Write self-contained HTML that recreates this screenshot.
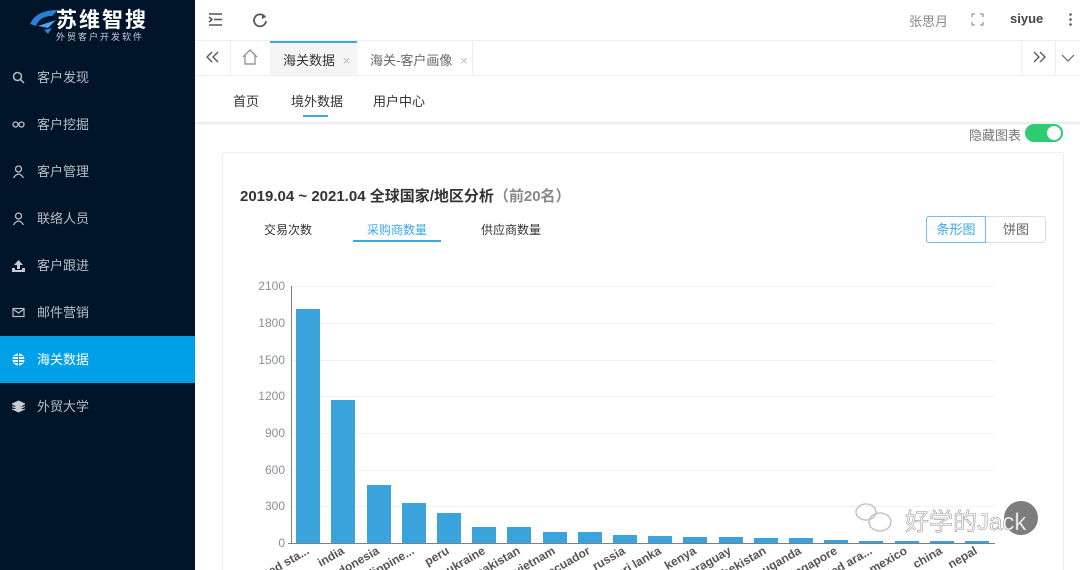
<!DOCTYPE html>
<html style="width:1080px;height:570px;overflow:hidden"><head><meta charset="utf-8"><style>
*{margin:0;padding:0;box-sizing:border-box}
body{width:1080px;height:570px;overflow:hidden;font-family:"Liberation Sans","Noto Sans CJK SC",sans-serif;background:#fff;position:relative;font-size:13px;color:#333}
.side{position:absolute;left:0;top:0;width:195px;height:570px;background:#001529}
.logo{position:absolute;left:30px;top:4px;color:#fff}
.item{position:absolute;left:0;width:195px;height:47px;color:#b8bec6;font-size:13px;line-height:47px;padding-left:37px}
.item i{position:absolute;left:12px;top:17px;width:13px;height:13px;display:block;line-height:0}
.item i svg{display:block}
.act{background:#00a0e9;color:#fff}
.abs{position:absolute}
</style></head><body>
<div class="side">
 <div class="logo">
  <svg class="abs" style="left:-4px;top:2px" width="40" height="30"><path d="M4 18 Q10 4 32 4 L26 10 Q14 10 10 20 Z" fill="#2a7fd6"/><path d="M12 20 L30 14 L22 22 Z" fill="#4fa3f0"/><path d="M18 24 L26 22 L22 28Z" fill="#2a7fd6"/></svg>
  <div class="abs" style="left:26px;top:0;font-size:21px;font-weight:bold;letter-spacing:2px;white-space:nowrap">苏维智搜</div>
  <div class="abs" style="left:26px;top:26px;font-size:9px;letter-spacing:2px;white-space:nowrap;color:#ccd">外贸客户开发软件</div>
 </div>
 <div class="item" style="top:54px"><i><svg width="13" height="13"><circle cx="5.5" cy="5.5" r="4" stroke="#b8bec6" stroke-width="1.5" fill="none"/><path d="M8.5 8.5 L12 12" stroke="#b8bec6" stroke-width="1.5"/></svg></i>客户发现</div>
 <div class="item" style="top:101px"><i><svg width="13" height="13"><circle cx="3.5" cy="6.5" r="2.5" stroke="#b8bec6" fill="none" stroke-width="1.3"/><circle cx="9.5" cy="6.5" r="2.5" stroke="#b8bec6" fill="none" stroke-width="1.3"/></svg></i>客户挖掘</div>
 <div class="item" style="top:148px"><i><svg width="13" height="13"><circle cx="6.5" cy="4" r="3" stroke="#b8bec6" fill="none" stroke-width="1.3"/><path d="M1.5 13 Q6.5 5 11.5 13" stroke="#b8bec6" fill="none" stroke-width="1.3"/></svg></i>客户管理</div>
 <div class="item" style="top:195px"><i><svg width="13" height="13"><circle cx="6.5" cy="4" r="3" stroke="#b8bec6" fill="none" stroke-width="1.3"/><path d="M1.5 13 Q6.5 5 11.5 13" stroke="#b8bec6" fill="none" stroke-width="1.3"/></svg></i>联络人员</div>
 <div class="item" style="top:242px"><i><svg width="13" height="13"><path d="M6.5 1 L2 6 H5 V10 H8 V6 H11Z M0 9 V13 H13 V9 H10 V11 H3 V9Z" fill="#c8ccd2"/></svg></i>客户跟进</div>
 <div class="item" style="top:289px"><i><svg width="13" height="13"><rect x="1" y="2.5" width="11" height="8" stroke="#b8bec6" fill="none" stroke-width="1.2"/><path d="M1 3 L6.5 7 L12 3" stroke="#b8bec6" fill="none" stroke-width="1.2"/></svg></i>邮件营销</div>
 <div class="item act" style="top:336px"><i><svg width="13" height="13"><circle cx="6.5" cy="6.5" r="6" fill="#fff"/><path d="M0.5 6.5 H12.5 M6.5 0.5 V12.5 M2 3.5 H11 M2 9.5 H11" stroke="#00a0e9" stroke-width="1"/></svg></i>海关数据</div>
 <div class="item" style="top:383px"><i><svg width="13" height="13"><path d="M6.5 1 L13 4 L6.5 7 L0 4Z M0 6.5 L6.5 9.5 L13 6.5 M0 9 L6.5 12 L13 9" fill="#c8ccd2" stroke="#c8ccd2" stroke-width="1"/></svg></i>外贸大学</div>
</div>
<svg class="abs" style="left:208px;top:12px" width="60" height="16"><path d="M1 2 H14 M6 7.5 H14 M1 13 H14 M1 5 L4 7.5 L1 10" stroke="#555" stroke-width="1.6" fill="none"/><path d="M57 5 A6 6 0 1 0 58 9" stroke="#555" stroke-width="1.8" fill="none"/><path d="M54 2 L58 5 L54 7Z" fill="#555"/></svg>
<div class="abs" style="left:909px;top:11px;color:#888;font-size:13px">张思月</div>
<svg class="abs" style="left:971px;top:13px" width="13" height="13"><path d="M1 4 V1 H4 M9 1 H12 V4 M12 9 V12 H9 M4 12 H1 V9" stroke="#999" stroke-width="1.3" fill="none"/></svg>
<div class="abs" style="left:1010px;top:11px;color:#444;font-size:13px;font-weight:bold">siyue</div>
<div class="abs" style="left:1069px;top:12px;width:3px;height:14px;background:radial-gradient(circle,#666 1.2px,transparent 1.5px) 0 0/3px 5px"></div>
<div class="abs" style="left:195px;top:40px;width:885px;height:36px;border-top:1px solid #eee;border-bottom:1px solid #eee"></div>
<div class="abs" style="left:230px;top:41px;width:1px;height:34px;background:#eee"></div>
<div class="abs" style="left:1021px;top:41px;width:1px;height:34px;background:#eee"></div>
<div class="abs" style="left:1055px;top:41px;width:1px;height:34px;background:#eee"></div>
<svg class="abs" style="left:206px;top:51px" width="14" height="12"><path d="M6 1 L1 6 L6 11 M12 1 L7 6 L12 11" stroke="#555" fill="none" stroke-width="1.3"/></svg>
<svg class="abs" style="left:1033px;top:51px" width="14" height="12"><path d="M1 1 L6 6 L1 11 M7 1 L12 6 L7 11" stroke="#555" fill="none" stroke-width="1.3"/></svg>
<svg class="abs" style="left:1061px;top:53px" width="14" height="10"><path d="M1 2 L7 8 L13 2" stroke="#666" fill="none" stroke-width="1.2"/></svg>
<svg class="abs" style="left:242px;top:49px" width="16" height="16"><path d="M1 8 L8 1 L15 8 M3 6 V15 H13 V6" stroke="#888" fill="none" stroke-width="1.2"/></svg>
<div class="abs" style="left:270px;top:41px;width:87px;height:34px;background:#f5f5f5;border-top:2px solid #3aa7e6"></div>
<div class="abs" style="left:283px;top:50px;font-size:13px;color:#333">海关数据 <span style="color:#bbb;margin-left:4px">×</span></div>
<div class="abs" style="left:357px;top:41px;width:116px;height:34px;border-right:1px solid #eee"></div>
<div class="abs" style="left:370px;top:50px;font-size:13px;color:#666">海关-客户画像 <span style="color:#bbb;margin-left:4px">×</span></div>
<div class="abs" style="left:233px;top:91px;font-size:13px;color:#333">首页</div>
<div class="abs" style="left:291px;top:91px;font-size:13px;color:#333">境外数据</div>
<div class="abs" style="left:303px;top:115px;width:25px;height:2px;background:#3aa7e6"></div>
<div class="abs" style="left:373px;top:91px;font-size:13px;color:#333">用户中心</div>
<div class="abs" style="left:195px;top:122px;width:885px;height:3px;background:linear-gradient(#e6e8ec,#fafafa)"></div>
<div class="abs" style="left:969px;top:125px;font-size:13px;color:#777">隐藏图表</div>
<div class="abs" style="left:1025px;top:124px;width:38px;height:18px;border-radius:9px;background:#2ecc71"><div style="position:absolute;right:2px;top:2px;width:14px;height:14px;border-radius:50%;background:#fff"></div></div>
<div class="abs" style="left:222px;top:152px;width:842px;height:418px;border:1px solid #eee;border-bottom:none;border-radius:2px 2px 0 0"></div>
<div class="abs" style="left:240px;top:185px;font-size:15px;font-weight:bold;color:#333">2019.04 ~ 2021.04 全球国家/地区分析<span style="color:#888">（前20名）</span></div>
<div class="abs" style="left:264px;top:221px;font-size:12px;color:#333">交易次数</div>
<div class="abs" style="left:367px;top:221px;font-size:12px;color:#3aa7e6">采购商数量</div>
<div class="abs" style="left:353px;top:240px;width:88px;height:2px;background:#3aa7e6"></div>
<div class="abs" style="left:481px;top:221px;font-size:12px;color:#333">供应商数量</div>
<div class="abs" style="left:926px;top:216px;width:120px;height:27px;border:1px solid #ddd;border-radius:3px"></div>
<div class="abs" style="left:926px;top:216px;width:60px;height:27px;border:1px solid #6bc0f0;border-radius:3px 0 0 3px;color:#3aa7e6;font-size:13px;text-align:center;line-height:25px">条形图</div>
<div class="abs" style="left:986px;top:216px;width:60px;height:27px;color:#666;font-size:13px;text-align:center;line-height:27px">饼图</div>
<svg class="abs" style="left:0;top:0" width="1080" height="570" font-family="Liberation Sans, sans-serif">
<g stroke="#f0f2f5" stroke-width="1">
<line x1="291" x2="995" y1="286.5" y2="286.5"/><line x1="291" x2="995" y1="323.5" y2="323.5"/><line x1="291" x2="995" y1="360.5" y2="360.5"/><line x1="291" x2="995" y1="396.5" y2="396.5"/><line x1="291" x2="995" y1="433.5" y2="433.5"/><line x1="291" x2="995" y1="470.5" y2="470.5"/><line x1="291" x2="995" y1="506.5" y2="506.5"/></g>
<g font-size="12" fill="#8a8f99" text-anchor="end">
<text x="285" y="290">2100</text><text x="285" y="327">1800</text><text x="285" y="364">1500</text><text x="285" y="400">1200</text><text x="285" y="437">900</text><text x="285" y="474">600</text><text x="285" y="510">300</text><text x="285" y="547">0</text></g>
<g stroke="#7a808a"><line x1="291.5" y1="286" x2="291.5" y2="544"/><line x1="288" y1="543.5" x2="995" y2="543.5"/></g>
<g fill="#3aa3dc">
<rect x="296" y="309" width="24" height="234"/><rect x="331" y="400" width="24" height="143"/><rect x="367" y="485" width="24" height="58"/><rect x="402" y="503" width="24" height="40"/><rect x="437" y="513" width="24" height="30"/><rect x="472" y="527" width="24" height="16"/><rect x="507" y="527" width="24" height="16"/><rect x="543" y="532" width="24" height="11"/><rect x="578" y="532" width="24" height="11"/><rect x="613" y="535" width="24" height="8"/><rect x="648" y="536" width="24" height="7"/><rect x="683" y="537" width="24" height="6"/><rect x="719" y="537" width="24" height="6"/><rect x="754" y="538" width="24" height="5"/><rect x="789" y="538" width="24" height="5"/><rect x="824" y="540" width="24" height="3"/><rect x="859" y="541" width="24" height="2"/><rect x="895" y="541" width="24" height="2"/><rect x="930" y="541" width="24" height="2"/><rect x="965" y="541" width="24" height="2"/></g>
<g font-size="12" font-weight="bold" fill="#555" text-anchor="end">
<text transform="translate(310,553) rotate(-30)">united sta...</text>
<text transform="translate(345,553) rotate(-30)">india</text>
<text transform="translate(380,553) rotate(-30)">indonesia</text>
<text transform="translate(415,553) rotate(-30)">philippine...</text>
<text transform="translate(450,553) rotate(-30)">peru</text>
<text transform="translate(486,553) rotate(-30)">ukraine</text>
<text transform="translate(521,553) rotate(-30)">pakistan</text>
<text transform="translate(556,553) rotate(-30)">vietnam</text>
<text transform="translate(591,553) rotate(-30)">ecuador</text>
<text transform="translate(626,553) rotate(-30)">russia</text>
<text transform="translate(662,553) rotate(-30)">sri lanka</text>
<text transform="translate(697,553) rotate(-30)">kenya</text>
<text transform="translate(732,553) rotate(-30)">paraguay</text>
<text transform="translate(767,553) rotate(-30)">uzbekistan</text>
<text transform="translate(802,553) rotate(-30)">uganda</text>
<text transform="translate(838,553) rotate(-30)">singapore</text>
<text transform="translate(873,553) rotate(-30)">united ara...</text>
<text transform="translate(908,553) rotate(-30)">mexico</text>
<text transform="translate(943,553) rotate(-30)">china</text>
<text transform="translate(978,553) rotate(-30)">nepal</text></g>
<circle cx="1021" cy="518" r="17" fill="#666" opacity="0.85"/>
<g fill="none" stroke="#bbb" stroke-width="1.3"><ellipse cx="866" cy="512" rx="10" ry="8"/><ellipse cx="880" cy="522" rx="11" ry="9"/></g>
<text x="905" y="530" font-size="24" fill="#fff" stroke="#999" stroke-width="0.6" font-family="Liberation Sans, Noto Sans CJK SC, sans-serif">好学的Jack</text>
</svg>
</body></html>
